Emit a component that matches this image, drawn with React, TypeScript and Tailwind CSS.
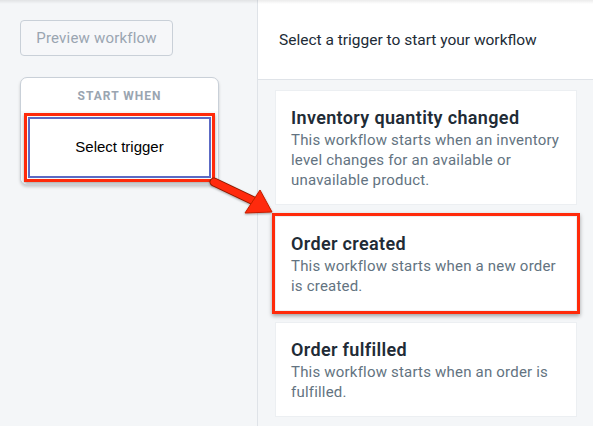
import React from "react";

const font = { fontFamily: "Roboto, 'Noto Sans', 'Liberation Sans', sans-serif" };

function Card({ title, desc, highlight }: { title: string; desc: string; highlight?: boolean }) {
  return (
    <div className="relative bg-white border border-[#eceff2] pl-[15px] pr-[12px] pt-[15px] pb-[14px]">
      {highlight && (
        <div className="absolute -inset-[4px] border-[3px] border-[#ff2a0a] shadow-[0_2px_4px_rgba(0,0,0,0.35)] pointer-events-none" />
      )}
      <div className="text-[18px] leading-[24px] font-semibold text-[#212b36] tracking-[0.35px]">{title}</div>
      <div className="text-[15px] leading-[20px] text-[#637381] tracking-[0.2px]">{desc}</div>
    </div>
  );
}

export default function App() {
  return (
    <div className="relative w-[593px] h-[426px] overflow-hidden flex bg-[#f4f6f8]" style={font}>
      <div className="absolute top-0 left-0 right-0 h-[4px] bg-gradient-to-b from-[rgba(0,0,0,0.08)] to-transparent z-10" />
      {/* Left panel */}
      <div className="w-[258px] shrink-0 border-r border-[#dfe3e8] pt-[20px] pl-[20px]">
        <button className="h-[36px] w-[153px] rounded-[4px] border border-[#c9d0d8] bg-[#f6f7f9] text-[15px] tracking-[0.2px] text-[#9aa5b1]">
          Preview workflow
        </button>
        <div className="mt-[21px] w-[199px] rounded-[7px] border border-[#c9d0d8] bg-white shadow-[0_2px_3px_rgba(0,0,0,0.18)] overflow-hidden">
          <div className="h-[33px] flex items-center justify-center text-[12px] font-bold tracking-[1px] text-[#9aa5b1] pt-[2px]">
            START WHEN
          </div>
          <div className="bg-[#f9fafb] px-[3px] pt-[2px] pb-[2px]">
            <div className="border-[3px] border-[#ff2a0a] p-[1px] shadow-[0_2px_3px_rgba(0,0,0,0.3)]">
              <div className="h-[61px] border-2 border-[#5c6ac4] bg-white flex items-center justify-center text-[15px] text-black" style={{ fontFamily: "'Liberation Sans', Arial, sans-serif" }}>
                Select trigger
              </div>
            </div>
          </div>
        </div>
      </div>
      {/* Right panel */}
      <div className="flex-1 flex flex-col">
        <div className="h-[80px] shrink-0 bg-white border-b border-[#dfe3e8] flex items-center pl-[21px] pt-[2px]">
          <span className="text-[15.5px] text-[#212b36]">Select a trigger to start your workflow</span>
        </div>
        <div className="flex flex-col gap-[11px] pt-[10px] pl-[17px] pr-[16px]">
          <Card title="Inventory quantity changed" desc="This workflow starts when an inventory level changes for an available or unavailable product." />
          <Card title="Order created" desc="This workflow starts when a new order is created." highlight />
          <Card title="Order fulfilled" desc="This workflow starts when an order is fulfilled." />
        </div>
      </div>
      {/* Arrow */}
      <svg className="absolute left-[200px] top-[168px] z-20" width="80" height="55" viewBox="0 0 80 55">
        <defs>
          <filter id="sh" x="-20%" y="-20%" width="140%" height="140%">
            <feDropShadow dx="0" dy="1" stdDeviation="1" floodColor="#000" floodOpacity="0.35" />
          </filter>
        </defs>
        <g filter="url(#sh)">
          <line x1="14" y1="14" x2="56" y2="34" stroke="#8a1a00" strokeWidth="9" strokeLinecap="round" />
          <line x1="14" y1="14" x2="56" y2="34" stroke="#ff2a0a" strokeWidth="7" strokeLinecap="round" />
          <polygon points="72,44 45,45 60,22" fill="#ff2a0a" stroke="#c41e00" strokeWidth="1" strokeLinejoin="round" />
        </g>
      </svg>
    </div>
  );
}
